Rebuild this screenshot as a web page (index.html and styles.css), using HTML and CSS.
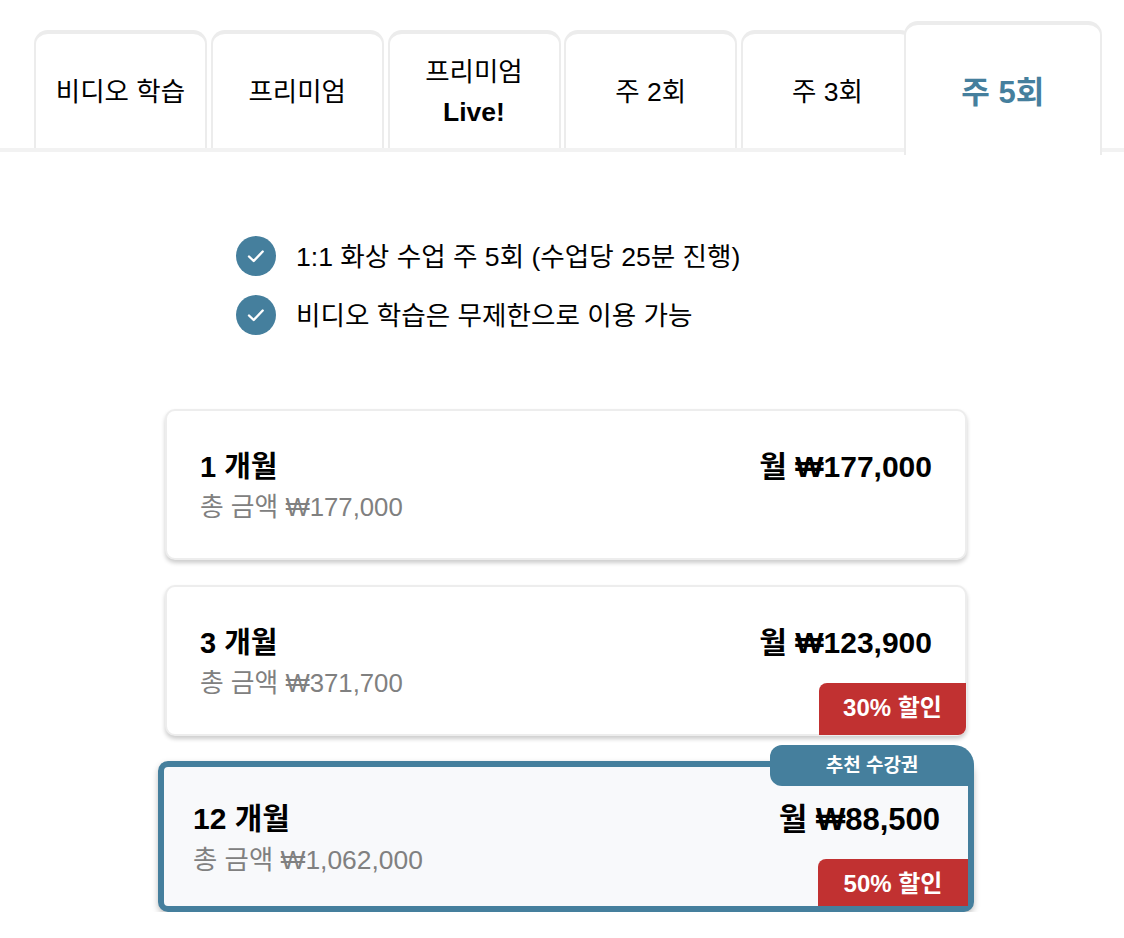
FILE: index.html
```html
<!DOCTYPE html>
<html lang="ko">
<head>
    <meta charset="UTF-8">
    <meta name="viewport" content="width=device-width, initial-scale=1.0">
    <title>수강권</title>
    <link rel="stylesheet" href="styles.css">
</head>
<body>

    <!-- Tabs -->
    <div class="tabs">
        <div class="tab"><span>비디오 학습</span></div>
        <div class="tab"><span>프리미엄</span></div>
        <div class="tab"><span>프리미엄<br><b>Live!</b></span></div>
        <div class="tab"><span>주 2회</span></div>
        <div class="tab"><span>주 3회</span></div>
        <div class="tab active"><span>주 5회</span></div>
    </div>

    <!-- Features -->
    <ul class="features">
        <li>
            <svg class="check" viewBox="0 0 40 40"><circle cx="20" cy="20" r="20" fill="#457f9d"/><path d="M13 20.5l4.7 4.5 9-9.5" fill="none" stroke="#fff" stroke-width="2.4" stroke-linecap="round" stroke-linejoin="round"/></svg>
            <span>1:1 화상 수업 주 5회 (수업당 25분 진행)</span>
        </li>
        <li>
            <svg class="check" viewBox="0 0 40 40"><circle cx="20" cy="20" r="20" fill="#457f9d"/><path d="M13 20.5l4.7 4.5 9-9.5" fill="none" stroke="#fff" stroke-width="2.4" stroke-linecap="round" stroke-linejoin="round"/></svg>
            <span>비디오 학습은 무제한으로 이용 가능</span>
        </li>
    </ul>

    <!-- Plans -->
    <div class="plans">
        <div class="plan">
            <div class="plan-row">
                <span class="plan-name">1 개월</span>
                <span class="plan-price">월 ₩177,000</span>
            </div>
            <div class="plan-total">총 금액 ₩177,000</div>
        </div>

        <div class="plan">
            <div class="plan-row">
                <span class="plan-name">3 개월</span>
                <span class="plan-price">월 ₩123,900</span>
            </div>
            <div class="plan-total">총 금액 ₩371,700</div>
            <div class="discount">30% 할인</div>
        </div>

        <div class="plan best">
            <div class="recommend">추천 수강권</div>
            <div class="plan-row">
                <span class="plan-name">12 개월</span>
                <span class="plan-price">월 ₩88,500</span>
            </div>
            <div class="plan-total">총 금액 ₩1,062,000</div>
            <div class="discount">50% 할인</div>
        </div>
    </div>

</body>
</html>
```

FILE: styles.css
```css
body {
    margin: 0;
    font-family: "Liberation Sans", "Noto Sans CJK KR", sans-serif;
    background: #fff;
    color: #000;
}

/* Tabs */
.tabs {
    display: flex;
    align-items: flex-end;
    height: 152px;
    box-sizing: border-box;
    padding-left: 34px;
    border-bottom: 4px solid #f2f2f2;
}

.tab {
    display: flex;
    align-items: center;
    justify-content: center;
    box-sizing: border-box;
    width: 173px;
    height: 118px;
    margin-right: 3.75px;
    padding-top: 2px;
    text-align: center;
    font-size: 26.5px;
    line-height: 40px;
    background: #fff;
    border: 2px solid #ececec;
    border-top-width: 4px;
    border-bottom: none;
    border-radius: 14px 14px 0 0;
}

.tab.active {
    position: relative;
    width: 198px;
    height: 134px;
    margin-left: -14px;
    margin-right: 0;
    margin-bottom: -7px;
    padding-top: 5px;
    font-size: 31px;
    font-weight: bold;
    color: #457f9d;
}

/* Features */
.features {
    list-style: none;
    margin: 0;
    padding: 84px 0 0 236px;
}

.features li {
    display: flex;
    align-items: center;
    gap: 20px;
    height: 40px;
    margin-bottom: 19px;
    font-size: 26.6px;
}

.features span {
    margin-bottom: 4px;
}

.check {
    width: 40px;
    height: 40px;
    flex: none;
}

/* Plans */
.plans {
    margin: 74px 157px 0 165px;
}

.plan {
    position: relative;
    box-sizing: border-box;
    height: 151px;
    margin-bottom: 25px;
    padding: 32px 33px 0 33px;
    border: 2px solid #ededed;
    border-radius: 10px;
    background: #fff;
    box-shadow: 0 3px 4px rgba(0, 0, 0, 0.2);
}

.plan-row {
    display: flex;
    justify-content: space-between;
    align-items: center;
    height: 42px;
    font-weight: bold;
}

.plan-name {
    font-size: 29px;
}

.plan-price {
    font-size: 30px;
}

.plan-total {
    margin-top: 4px;
    font-size: 25.75px;
    line-height: 36px;
    color: #808080;
}

.discount {
    position: absolute;
    right: -1px;
    bottom: -1px;
    width: 147px;
    height: 52px;
    line-height: 50px;
    text-align: center;
    font-size: 24px;
    font-weight: bold;
    color: #fff;
    background: #c13131;
    border-radius: 8px 0 8px 0;
}

.plan.best {
    margin: 0 -7px;
    padding: 28px 28px 0 29px;
    border: 6px solid #457f9d;
    background: #f8f9fb;
    box-shadow: 0 3px 6px rgba(0, 0, 0, 0.25);
}

.best .plan-name {
    font-size: 30px;
}

.best .plan-price {
    font-size: 31px;
}

.best .plan-total {
    margin-top: 5px;
    font-size: 26.4px;
}

.best .discount {
    right: 0;
    bottom: 0;
    width: 150px;
    height: 47px;
    line-height: 50px;
    border-radius: 8px 0 0 0;
}

.recommend {
    position: absolute;
    top: -22px;
    right: -6px;
    width: 204px;
    height: 41px;
    line-height: 42px;
    text-align: center;
    font-size: 19px;
    font-weight: bold;
    color: #fff;
    background: #457f9d;
    border-radius: 12px 20px 0 12px;
}
```
